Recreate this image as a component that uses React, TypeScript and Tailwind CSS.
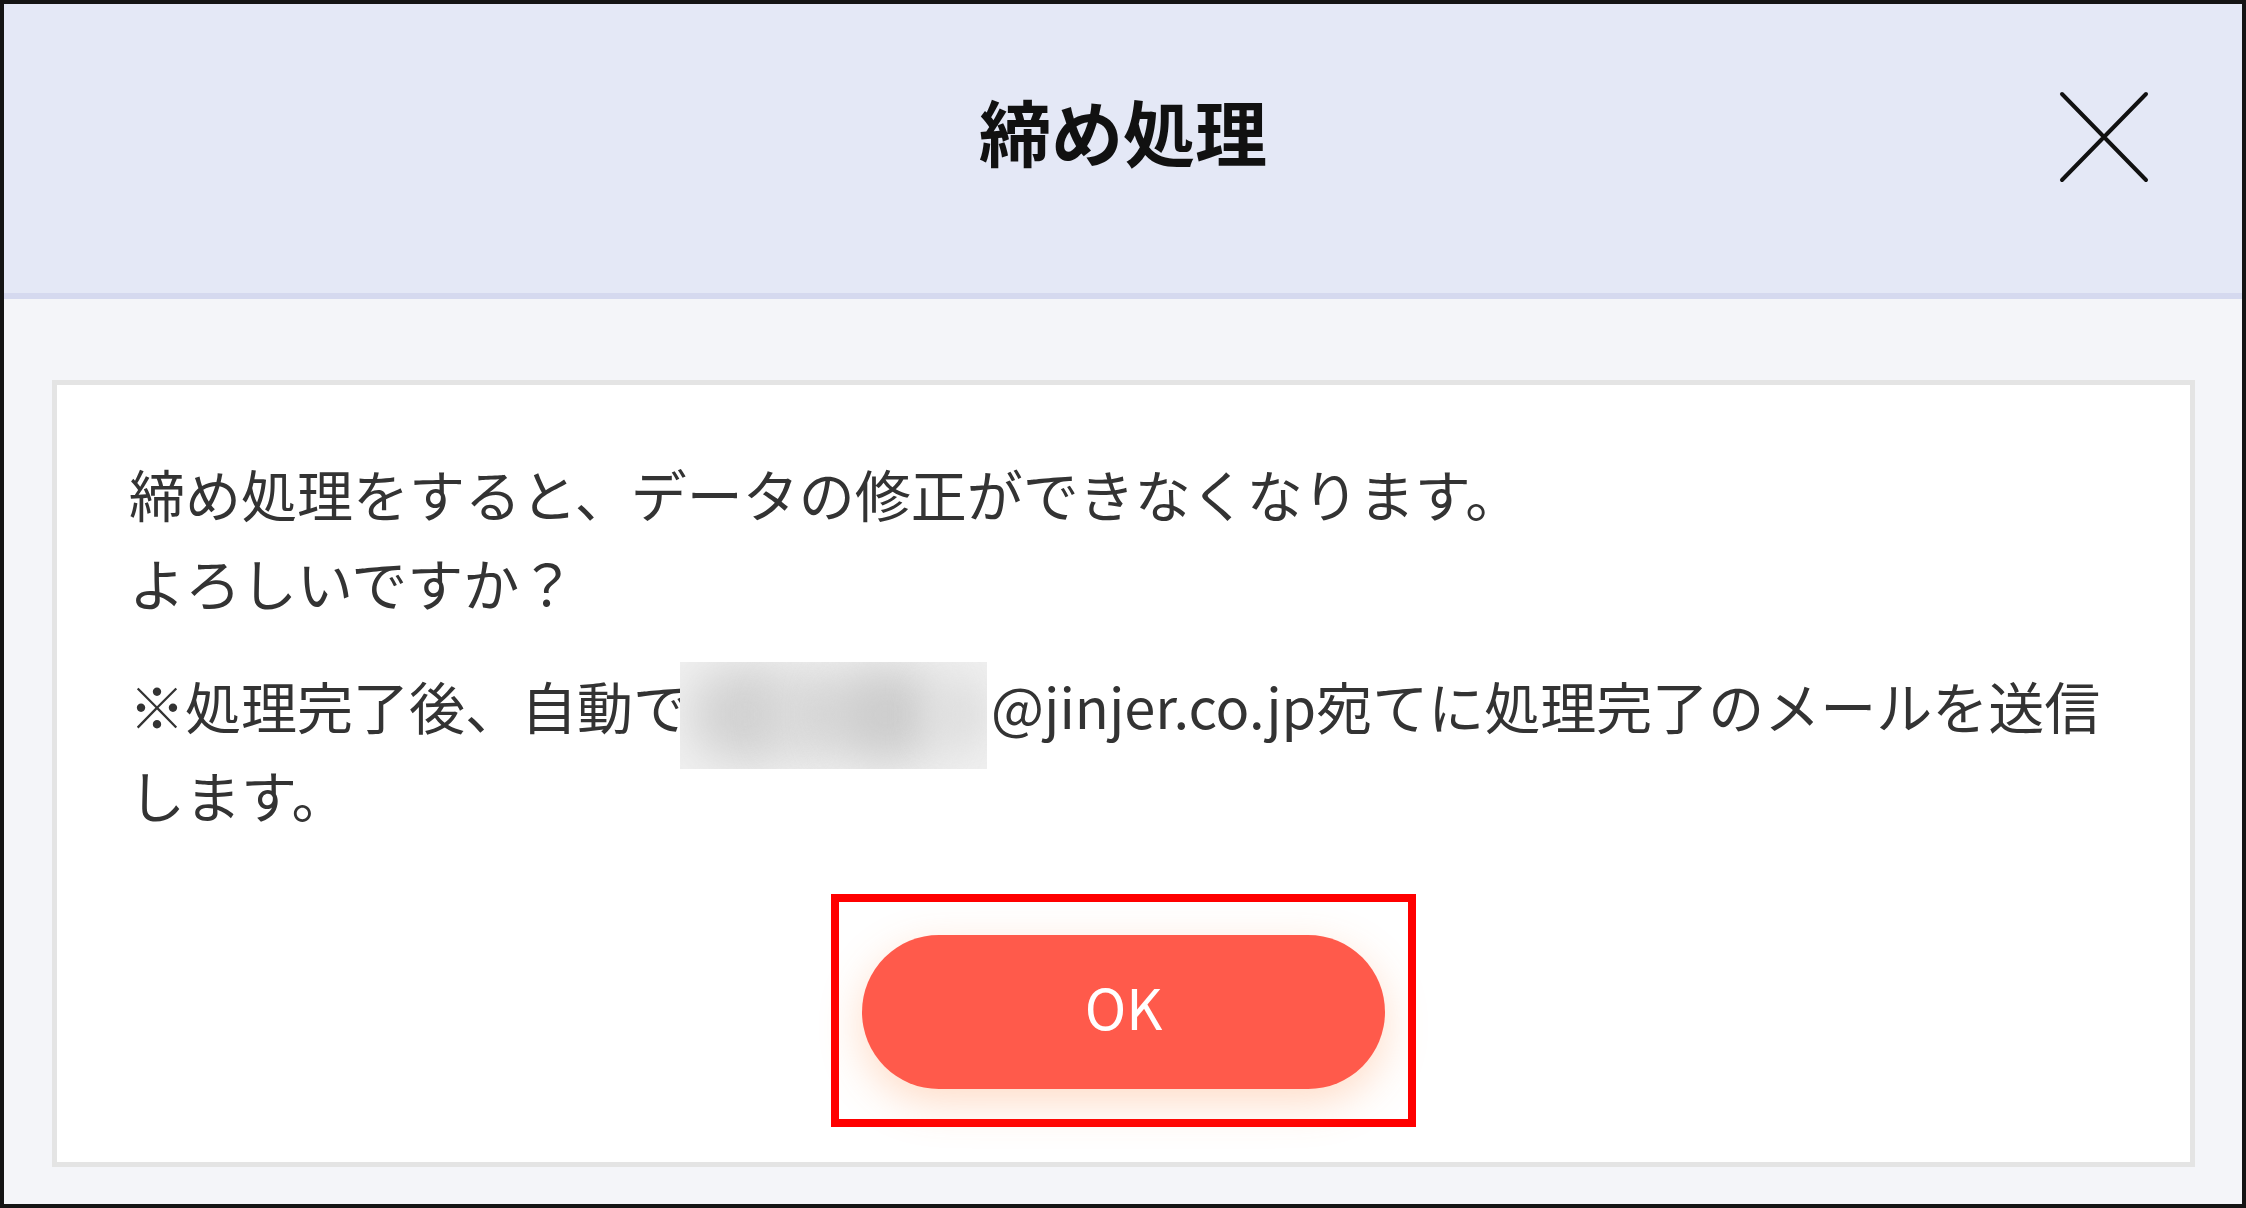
export default function App() {
  return (
    <div className="w-[2246px] h-[1208px] border-[4px] border-[#141414] flex flex-col bg-[#F4F5F9] font-['Noto_Sans_CJK_JP',sans-serif] overflow-hidden">
      <header className="h-[295px] shrink-0 bg-[#E4E8F6] border-b-[6px] border-[#D5D9EF] grid grid-cols-[1fr_auto_1fr] items-center pb-[24px]">
        <div />
        <h1 className="text-[72px] font-bold text-[#111111] leading-none pb-[14px]">締め処理</h1>
        <div className="flex justify-end pr-[93px]">
          <svg width="90" height="92" viewBox="0 0 90 92" aria-label="close">
            <path d="M3 3 L87 89 M87 3 L3 89" stroke="#111111" strokeWidth="4" strokeLinecap="round" fill="none" />
          </svg>
        </div>
      </header>
      <main className="flex-1 pt-[81px] pl-[48px] pr-[47px] pb-[37px]">
        <div className="h-full bg-white border-[5px] border-[#E4E4E4] pt-[63px] px-[72px] pb-[35px] flex flex-col text-[56px] leading-[89px] text-[#333333]">
          <p>
            締め処理をすると、データの修正ができなくなります。
            <br />
            よろしいですか？
          </p>
          <p className="mt-[34px]">
            ※処理完了後、自動で
            <span className="relative inline-block w-[302px] align-top text-right">
              a
              <span className="absolute left-[-9px] top-[2px] w-[307px] h-[107px] overflow-hidden bg-[#F0F0F0]">
                <span className="absolute left-[10px] top-[5px] w-[110px] h-[95px] rounded-full bg-[#D2D2D2] blur-[22px]" />
                <span className="absolute left-[95px] top-[10px] w-[80px] h-[85px] rounded-full bg-[#D8D8D8] blur-[22px]" />
                <span className="absolute left-[150px] top-[5px] w-[110px] h-[95px] rounded-full bg-[#CDCDCD] blur-[22px]" />
                <span className="absolute left-[250px] top-[15px] w-[60px] h-[75px] rounded-full bg-[#DEDEDE] blur-[20px]" />
              </span>
            </span>
            @jinjer.co.jp宛てに処理完了のメールを送信
            <br />
            します。
          </p>
          <div className="mt-auto self-center border-[8px] border-[#FF0000] pt-[33px] pb-[30px] px-[23px]">
            <button className="w-[523px] h-[154px] rounded-full bg-[#FF5A4B] text-white text-[56px] leading-none pb-[12px] shadow-[0_14px_44px_rgba(255,140,70,0.3)]">
              OK
            </button>
          </div>
        </div>
      </main>
    </div>
  );
}
